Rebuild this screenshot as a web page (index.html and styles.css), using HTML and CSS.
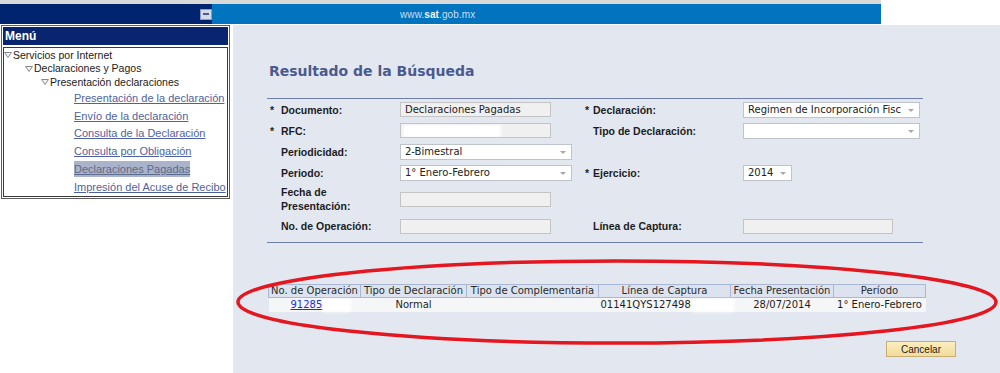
FILE: index.html
```html
<!DOCTYPE html>
<html lang="es">
<head>
<meta charset="utf-8">
<title>SAT - Resultado de la Búsqueda</title>
<link rel="stylesheet" href="styles.css">
</head>
<body>
<header class="top">
  <div class="top-main">
    <div class="top-left"><span class="min-btn"></span></div>
    <div class="top-blue"><span class="site">www.<b>sat</b>.gob.mx</span></div>
  </div>
</header>
<div class="main">
  <aside class="side">
    <div class="menu">
      <div class="menu-head">Menú</div>
      <div class="tree">
        <div class="node lvl1"><svg class="tri" viewBox="0 0 8 6" width="8" height="6"><polygon points="0.5,0.5 7.5,0.5 4,5.5" /></svg>Servicios por Internet</div>
        <div class="node lvl2"><svg class="tri" viewBox="0 0 8 6" width="8" height="6"><polygon points="0.5,0.5 7.5,0.5 4,5.5" /></svg>Declaraciones y Pagos</div>
        <div class="node lvl3"><svg class="tri" viewBox="0 0 8 6" width="8" height="6"><polygon points="0.5,0.5 7.5,0.5 4,5.5" /></svg>Presentación declaraciones</div>
        <div class="leaf"><a href="#">Presentación de la declaración</a></div>
        <div class="leaf"><a href="#">Envío de la declaración</a></div>
        <div class="leaf"><a href="#">Consulta de la Declaración</a></div>
        <div class="leaf"><a href="#">Consulta por Obligación</a></div>
        <div class="leaf"><a href="#" class="active">Declaraciones Pagadas</a></div>
        <div class="leaf"><a href="#">Impresión del Acuse de Recibo</a></div>
      </div>
    </div>
  </aside>
  <main class="content">
    <h1 class="title">Resultado de la Búsqueda</h1>
    <div class="form">
      <span class="star">*</span><span class="lbl">Documento:</span>
      <div class="cell"><div class="inp">Declaraciones Pagadas</div></div>
      <span class="star">*</span><span class="lbl">Declaración:</span>
      <div class="cell"><div class="sel w177">Regimen de Incorporación Fisc</div></div>

      <span class="star">*</span><span class="lbl">RFC:</span>
      <div class="cell"><div class="inp"><span class="redact r-rfc"></span></div></div>
      <span class="star"></span><span class="lbl">Tipo de Declaración:</span>
      <div class="cell"><div class="sel w177"></div></div>

      <span class="star"></span><span class="lbl">Periodicidad:</span>
      <div class="cell"><div class="sel w172">2-Bimestral</div></div>
      <span class="star"></span><span class="lbl"></span><div class="cell"></div>

      <span class="star"></span><span class="lbl">Periodo:</span>
      <div class="cell"><div class="sel w172">1° Enero-Febrero</div></div>
      <span class="star">*</span><span class="lbl">Ejercicio:</span>
      <div class="cell"><div class="sel w49">2014</div></div>

      <span class="star"></span><span class="lbl">Fecha de<br>Presentación:</span>
      <div class="cell"><div class="inp"></div></div>
      <span class="star"></span><span class="lbl"></span><div class="cell"></div>

      <span class="star"></span><span class="lbl">No. de Operación:</span>
      <div class="cell"><div class="inp"></div></div>
      <span class="star"></span><span class="lbl">Línea de Captura:</span>
      <div class="cell"><div class="inp w150"></div></div>
    </div>

    <table class="results">
      <colgroup>
        <col class="c1"><col class="c2"><col class="c3">
        <col class="c4"><col class="c5"><col class="c6">
      </colgroup>
      <thead>
        <tr>
          <th>No. de Operación</th>
          <th>Tipo de Declaración</th>
          <th>Tipo de Complementaria</th>
          <th>Línea de Captura</th>
          <th>Fecha Presentación</th>
          <th>Período</th>
        </tr>
      </thead>
      <tbody>
        <tr>
          <td class="op"><a href="#">91285</a><span class="redact r-op"></span></td>
          <td class="c">Normal</td>
          <td></td>
          <td class="lc">01141QYS127498<span class="redact r-lc"></span></td>
          <td class="c">28/07/2014</td>
          <td class="c">1° Enero-Febrero</td>
        </tr>
      </tbody>
    </table>

    <div class="actions"><button class="btn" type="button">Cancelar</button></div>
  </main>
</div>
<svg class="mark" viewBox="0 0 1000 373" width="1000" height="373">
  <ellipse cx="617" cy="302" rx="379" ry="41" />
</svg>
</body>
</html>
```

FILE: styles.css
```css
html, body {
  margin: 0;
  padding: 0;
}
body {
  width: 1000px;
  height: 373px;
  overflow: hidden;
  position: relative;
  background: #ffffff;
  font-family: "Liberation Sans", Arial, sans-serif;
  color: #1d1d1d;
}

/* ---------- top bar ---------- */
.top {
  height: 25px;
  display: flex;
}
.top-main {
  width: 881px;
  display: flex;
  box-sizing: border-box;
  border-top: 4px solid #d9d9d9;
  border-bottom: 1px solid #ffffff;
}
.top-left {
  width: 212px;
  background: #00246d;
  display: flex;
  align-items: center;
  justify-content: flex-end;
}
.min-btn {
  width: 10px;
  height: 9px;
  background: #d3dbea;
  border: 1px solid #8d9bbd;
  display: flex;
  align-items: center;
  justify-content: center;
}
.min-btn::after {
  content: "";
  width: 6px;
  height: 2px;
  background: #4d5c86;
}
.top-blue {
  flex: 1;
  background: #0074bf;
  display: flex;
  align-items: center;
  padding-left: 188px;
}
.site {
  font-size: 10px;
  color: #c9def3;
  letter-spacing: 0.1px;
}
.site b {
  color: #eef5fc;
}

/* ---------- layout ---------- */
.main {
  display: flex;
  height: 348px;
}
.side {
  width: 233px;
  flex: none;
}
.content {
  flex: 1;
  background: #e3e8f0;
  padding-left: 34px;
  box-sizing: border-box;
}

/* ---------- menu ---------- */
.menu {
  margin-left: 1px;
  width: 229px;
  box-sizing: border-box;
  border: 1px solid #5d5d5d;
  padding: 1px;
}
.menu-head {
  height: 18px;
  background: #0a256f;
  color: #ffffff;
  font-weight: bold;
  font-size: 12px;
  line-height: 18px;
  padding-left: 2px;
}
.tree {
  margin-top: 2px;
  border: 1px solid #3a3a3a;
  height: 150px;
  box-sizing: border-box;
  font-size: 10.5px;
}
.node {
  height: 13.5px;
  line-height: 13.5px;
  display: flex;
  align-items: center;
  color: #1a1a1a;
  white-space: nowrap;
}
.node .tri {
  margin-right: 1px;
  flex: none;
}
.tri polygon {
  fill: #f2f2f2;
  stroke: #8a8a8a;
  stroke-width: 1;
}
.lvl1 { padding-left: 0; margin-top: 0.5px; }
.lvl2 { padding-left: 21px; }
.lvl3 { padding-left: 37px; }
.leaf {
  height: 17.8px;
  display: flex;
  align-items: center;
  padding-left: 70px;
  white-space: nowrap;
}
.leaf a {
  font-size: 11px;
  color: #4f62a0;
  text-decoration: underline;
  line-height: 16px;
  display: inline-block;
}
.leaf a.active {
  background: #a9b3ca;
  color: #5d6a8c;
}

/* ---------- title ---------- */
.title {
  margin: 37px 0 0 2px;
  height: 18px;
  line-height: 18px;
  font-family: "DejaVu Sans", Verdana, sans-serif;
  font-size: 14px;
  font-weight: bold;
  color: #4a5a8d;
}

/* ---------- form ---------- */
.form {
  margin-top: 18px;
  width: 656px;
  display: grid;
  grid-template-columns: 14px 119px 182px 11px 150px 180px;
  grid-template-rows: 21px 21px 21px 22px 30px 24px;
  align-items: center;
  border-top: 1px solid #6f7fa7;
  border-bottom: 1px solid #6f7fa7;
  padding-bottom: 4px;
}
.star {
  font-size: 10.5px;
  font-weight: bold;
  padding-left: 3px;
}
.lbl {
  font-size: 10.5px;
  font-weight: bold;
  color: #1c1c24;
  line-height: 14px;
}
.cell {
  display: flex;
  align-items: center;
}
.inp, .sel {
  height: 15px;
  box-sizing: border-box;
  font-family: "DejaVu Sans", Verdana, sans-serif;
  font-size: 10px;
  line-height: 13px;
  padding-left: 4px;
  color: #222;
  white-space: nowrap;
  overflow: hidden;
  position: relative;
}
.inp {
  width: 151px;
  background: #f0f0f0;
  border: 1px solid #c4c4c4;
}
.inp.w150 { width: 150px; }
.sel {
  height: 16px;
  line-height: 14px;
  background: #ffffff;
  border: 1px solid #bfc4cc;
  padding-right: 14px;
}
.sel::after {
  content: "";
  position: absolute;
  right: 5px;
  top: 6px;
  border-left: 3px solid transparent;
  border-right: 3px solid transparent;
  border-top: 3px solid #a8a8a8;
}
.w172 { width: 172px; }
.w177 { width: 177px; }
.w49 { width: 49px; }

/* ---------- redaction blurs ---------- */
.redact {
  display: inline-block;
  background: #ffffff;
  filter: blur(1.5px);
}
.r-rfc {
  position: absolute;
  left: 2px;
  top: 1px;
  width: 98px;
  height: 12px;
}
.r-op {
  width: 28px;
  height: 13px;
  vertical-align: middle;
  margin-left: 1px;
}
.r-lc {
  width: 42px;
  height: 13px;
  vertical-align: middle;
  margin-left: 1px;
}

/* ---------- results table ---------- */
.results {
  margin: 41px 0 0 1px;
  border-collapse: collapse;
  table-layout: fixed;
  width: 657px;
  font-family: "DejaVu Sans", Verdana, sans-serif;
  font-size: 10px;
}
.results .c1 { width: 92px; }
.results .c2 { width: 106px; }
.results .c3 { width: 132px; }
.results .c4 { width: 132px; }
.results .c5 { width: 103px; }
.results .c6 { width: 92px; }
.results th {
  height: 12px;
  padding: 0;
  font-weight: normal;
  color: #2a2a2a;
  background: #dce3ef;
  border: 1px solid #a9b8d2;
  text-align: center;
  white-space: nowrap;
  overflow: hidden;
  line-height: 12px;
}
.results td {
  height: 14px;
  padding: 0;
  background: #f5f6f8;
  color: #1e1e1e;
  white-space: nowrap;
  line-height: 14px;
}
.results td.c { text-align: center; }
.results td.op { padding-left: 22px; }
.results td.op a { color: #1b2fd6; text-decoration: underline; }
.results td.lc { padding-left: 2px; }

/* ---------- actions ---------- */
.actions {
  display: flex;
  justify-content: flex-end;
  padding-right: 44px;
  margin-top: 29px;
}
.btn {
  width: 70px;
  height: 16px;
  padding: 0;
  font-family: "Liberation Sans", Arial, sans-serif;
  font-size: 10px;
  color: #222;
  background: linear-gradient(#fbeebf, #f3dc9c);
  border: 1px solid #c7ae72;
  border-radius: 0;
}

/* ---------- hand-drawn marker ---------- */
.mark {
  position: absolute;
  left: 0;
  top: 0;
  pointer-events: none;
}
.mark ellipse {
  fill: none;
  stroke: #e4161f;
  stroke-width: 3.5;
}
```
